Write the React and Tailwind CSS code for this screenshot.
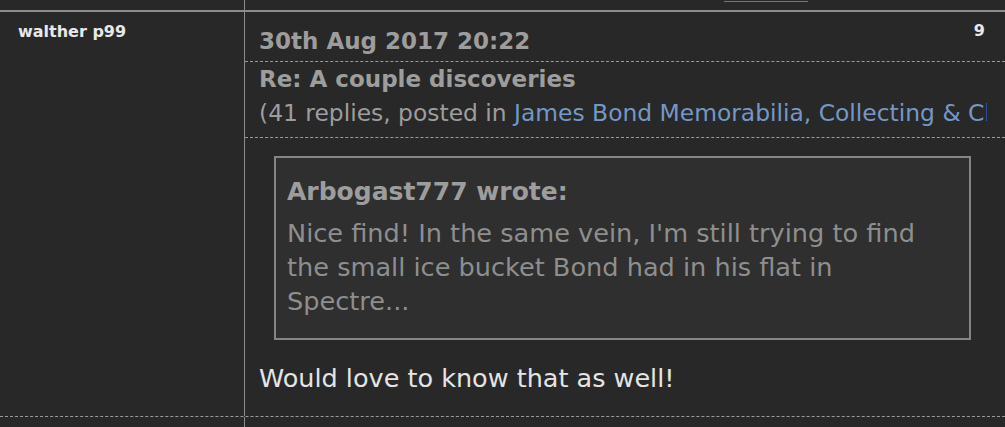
export default function App() {
  return (
    <div className="w-[1005px] h-[427px] overflow-hidden bg-[#282828] font-['DejaVu_Sans',sans-serif]">
      {/* top strip from previous post */}
      <div className="flex h-[12px] border-b-2 border-[#8c8c8c]">
        <div className="w-[245px] shrink-0 border-r border-[#8c8c8c]" />
        <div className="flex-1 relative">
          <div className="absolute left-[479px] top-[1px] w-[84px] h-px bg-[#5a7aa8]" />
        </div>
      </div>

      {/* post */}
      <div className="flex h-[405px] border-b border-dashed border-[#9a9a9a]">
        <div className="w-[245px] shrink-0 border-r border-[#8c8c8c] pl-[18px] pt-[10px]">
          <div className="text-[16px] font-bold text-[#e8e8e8] leading-[20px]">walther p99</div>
        </div>
        <div className="flex-1 min-w-0 overflow-hidden">
          <div className="flex justify-between items-start h-[50px] border-b border-dashed border-[#9a9a9a] pl-[14px] pr-[20px]">
            <span className="pt-[15px] text-[23px] font-bold text-[#9d9d9d] leading-[28px]">30th Aug 2017 20:22</span>
            <span className="pt-[9px] text-[16px] font-bold text-[#e8e8e8] leading-[20px]">9</span>
          </div>
          <div className="h-[76px] border-b border-dashed border-[#9a9a9a] pl-[14px] pr-[18px] whitespace-nowrap">
            <div className="text-[23px] font-bold text-[#9d9d9d] leading-[34px]">Re: A couple discoveries</div>
            <div className="overflow-hidden text-[23.4px] text-[#9d9d9d] leading-[34px]">
              (41 replies, posted in <span className="text-[#7498c6]">James Bond Memorabilia, Collecting &amp; Clothing</span>)
            </div>
          </div>
          <div className="pl-[29px] pr-[34px] pt-[18px]">
            <div className="border-2 border-[#858585] bg-[#2f2f2f] px-[11px] pt-[17px] pb-[20px]">
              <div className="mb-[7px] text-[25px] font-bold text-[#9d9d9d] leading-[34px]">Arbogast777 wrote:</div>
              <div className="text-[25.6px] text-[#8e8e8e] leading-[34px] whitespace-nowrap">
                <div>Nice find! In the same vein, I'm still trying to find</div>
                <div>the small ice bucket Bond had in his flat in</div>
                <div>Spectre...</div>
              </div>
            </div>
            <div className="pt-[21px] -ml-[15px] text-[25.5px] text-[#e4e4e4] leading-[34px]">
              Would love to know that as well!
            </div>
          </div>
        </div>
      </div>

      <div className="flex h-[10px]">
        <div className="w-[245px] shrink-0 border-r border-[#8c8c8c]" />
      </div>
    </div>
  );
}
